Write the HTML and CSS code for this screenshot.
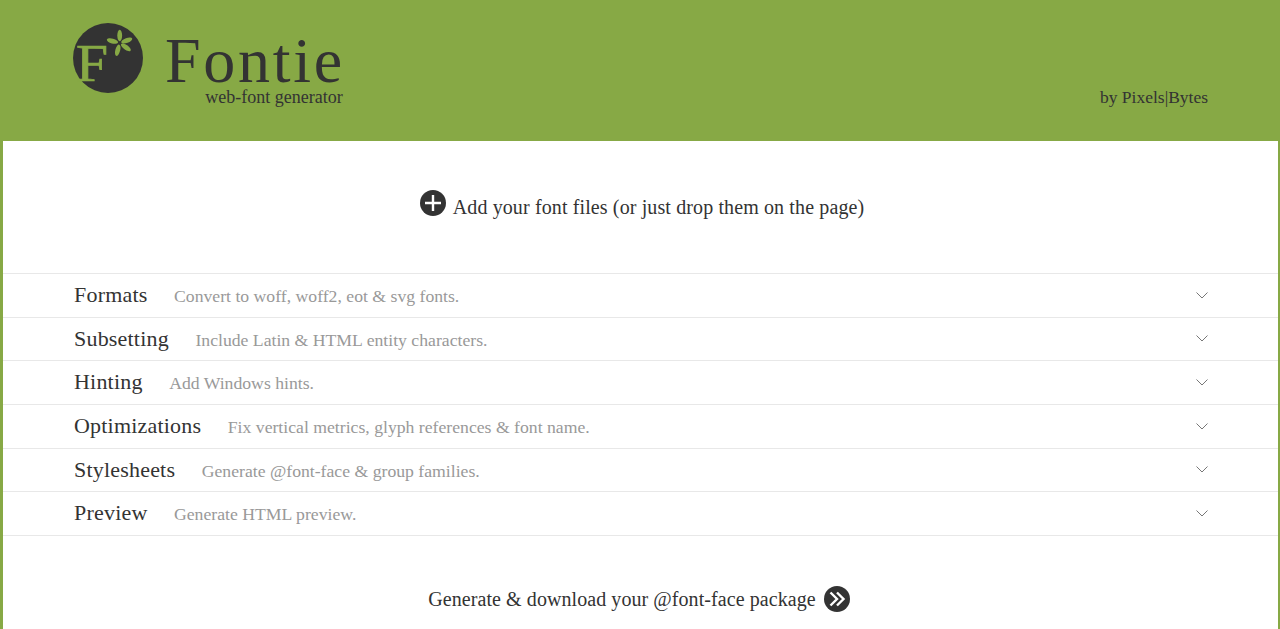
FILE: index.html
```html
<!DOCTYPE html>
<html lang="en">
<head>
  <meta charset="UTF-8">
  <meta name="viewport" content="width=device-width, initial-scale=1.0">
  <title>Fontie</title>
  <link rel="stylesheet" href="styles.css">
</head>
<body>
  <header class="header">
    <div class="brand">
      <svg class="logo" width="70" height="70" viewBox="0 0 70 70">
        <circle cx="35" cy="35" r="35" fill="#333"/>
        <text class="logo-f" x="3" y="58" textLength="32" lengthAdjust="spacingAndGlyphs">F</text>
        <g fill="#87a945">
          <ellipse cx="46.700" cy="12.500" rx="2.400" ry="5.800"/>
          <ellipse cx="46.700" cy="12.500" rx="2.400" ry="5.800" transform="rotate(70 46.700 20)"/>
          <ellipse cx="46.700" cy="12.500" rx="2.400" ry="5.800" transform="rotate(125 46.700 20)"/>
          <ellipse cx="46.700" cy="12.500" rx="2.400" ry="5.800" transform="rotate(195 46.700 20)"/>
          <ellipse cx="46.700" cy="12.500" rx="2.400" ry="5.800" transform="rotate(285 46.700 20)"/>
        </g>
      </svg>
      <div class="brand-text">
        <div class="brand-name">Fontie</div>
        <div class="brand-sub">web-font generator</div>
      </div>
    </div>
    <div class="byline">by Pixels|Bytes</div>
  </header>

  <main class="panel">
    <div class="add-row">
      <svg class="round-icon add-icon" width="26" height="26" viewBox="0 0 26 26">
        <circle cx="13" cy="13" r="13" fill="#333"/>
        <path d="M13 5V21M5 13H21" stroke="#fff" stroke-width="2.400"/>
      </svg>
      <span>Add your font files (or just drop them on the page)</span>
    </div>

    <ul class="options">
      <li class="option">
        <span class="option-name">Formats</span>
        <span class="option-desc">Convert to woff, woff2, eot &amp; svg fonts.</span>
        <svg class="chevron" width="12" height="7" viewBox="0 0 12 7"><path d="M.5.5L6 6L11.500.5" fill="none" stroke="#777"/></svg>
      </li>
      <li class="option">
        <span class="option-name">Subsetting</span>
        <span class="option-desc">Include Latin &amp; HTML entity characters.</span>
        <svg class="chevron" width="12" height="7" viewBox="0 0 12 7"><path d="M.5.5L6 6L11.500.5" fill="none" stroke="#777"/></svg>
      </li>
      <li class="option">
        <span class="option-name">Hinting</span>
        <span class="option-desc">Add Windows hints.</span>
        <svg class="chevron" width="12" height="7" viewBox="0 0 12 7"><path d="M.5.5L6 6L11.500.5" fill="none" stroke="#777"/></svg>
      </li>
      <li class="option">
        <span class="option-name">Optimizations</span>
        <span class="option-desc">Fix vertical metrics, glyph references &amp; font name.</span>
        <svg class="chevron" width="12" height="7" viewBox="0 0 12 7"><path d="M.5.5L6 6L11.500.5" fill="none" stroke="#777"/></svg>
      </li>
      <li class="option">
        <span class="option-name">Stylesheets</span>
        <span class="option-desc">Generate @font-face &amp; group families.</span>
        <svg class="chevron" width="12" height="7" viewBox="0 0 12 7"><path d="M.5.5L6 6L11.500.5" fill="none" stroke="#777"/></svg>
      </li>
      <li class="option">
        <span class="option-name">Preview</span>
        <span class="option-desc">Generate HTML preview.</span>
        <svg class="chevron" width="12" height="7" viewBox="0 0 12 7"><path d="M.5.5L6 6L11.500.5" fill="none" stroke="#777"/></svg>
      </li>
    </ul>

    <div class="generate-row">
      <span>Generate &amp; download your @font-face package</span>
      <svg class="round-icon" width="26" height="26" viewBox="0 0 26 26">
        <circle cx="13" cy="13" r="13" fill="#333"/>
        <path d="M6.500 6.500L13 13L6.500 19.500M13 6.500L19.500 13L13 19.500" fill="none" stroke="#fff" stroke-width="2.400"/>
      </svg>
    </div>
  </main>
</body>
</html>
```

FILE: styles.css
```css
html, body {
  height: 100%;
}
body {
  margin: 0;
  background: #87a945;
  color: #333;
  font-family: "Liberation Serif", serif;
  overflow: hidden;
}
.header {
  height: 141px;
  box-sizing: border-box;
  padding: 23px 72px 0 73px;
  display: flex;
  justify-content: space-between;
  color: #333;
}
.brand {
  display: flex;
  gap: 22px;
}
.logo-f {
  font-family: "Liberation Serif", serif;
  font-size: 53px;
  fill: #87a945;
  stroke: #87a945;
  stroke-width: .7px;
}
.brand-text {
  display: flex;
  flex-direction: column;
  align-items: flex-end;
  padding-top: 9px;
}
.brand-name {
  font-size: 64px;
  line-height: 58px;
  letter-spacing: 2.700px;
}
.brand-sub {
  font-size: 18px;
  line-height: 14px;
  margin-right: 2px;
}
.byline {
  font-size: 17.500px;
  line-height: 20px;
  margin-top: 64px;
}
.panel {
  margin: 0 2px 0 3px;
  background: #fff;
  height: 488px;
  overflow: hidden;
}
.add-row {
  height: 132px;
  display: flex;
  align-items: center;
  justify-content: center;
  gap: 7px;
  padding-left: 3px;
  font-size: 20px;
  letter-spacing: .12px;
}
.round-icon {
  flex: none;
}
.add-icon {
  margin-bottom: 8px;
}
.options {
  margin: 0;
  padding: 0;
  list-style: none;
  border-top: 1px solid #e8e8e8;
}
.option {
  height: 42.670px;
  display: flex;
  align-items: baseline;
  padding: 0 70px 0 71px;
  border-bottom: 1px solid #e8e8e8;
}
.option-name {
  font-size: 22px;
  letter-spacing: .2px;
  line-height: 42px;
  color: #333;
}
.option-desc {
  font-size: 17.700px;
  color: #999;
  margin-left: 26.500px;
}
.chevron {
  margin-left: auto;
  align-self: center;
}
.generate-row {
  height: 127px;
  display: flex;
  align-items: center;
  justify-content: center;
  gap: 8px;
  padding-right: 3px;
  font-size: 20px;
  letter-spacing: .07px;
}
```
